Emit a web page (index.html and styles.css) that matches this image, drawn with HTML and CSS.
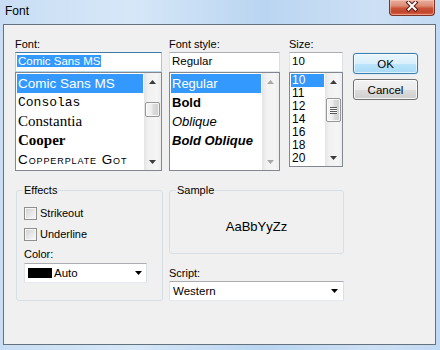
FILE: index.html
```html
<!DOCTYPE html>
<html lang="en">

<head>
  <meta charset="UTF-8">
  <title>Font</title>
  <link rel="stylesheet" href="styles.css">
</head>

<body>
  <div class="window">
    <div class="titlebar">
      <span class="title">Font</span>
      <div class="close">
        <svg width="14" height="11" viewBox="0 0 14 11">
          <path d="M3.5 1.5 L10.5 8.5 M10.5 1.5 L3.5 8.5" stroke="#5e2118" stroke-width="4.2" stroke-linecap="square" fill="none"/>
          <path d="M3.5 1.5 L10.5 8.5 M10.5 1.5 L3.5 8.5" stroke="#ffffff" stroke-width="2" stroke-linecap="square" fill="none"/>
        </svg>
      </div>
    </div>

    <div class="client">
      <div class="top-row">
        <div class="col col-font">
          <div class="label">Font:</div>
          <div class="textbox focused"><span class="sel">Comic Sans MS</span></div>
          <div class="listbox">
            <div class="items">
              <div class="item selected f-comic">Comic Sans MS</div>
              <div class="item f-consolas">Consolas</div>
              <div class="item f-constantia">Constantia</div>
              <div class="item f-cooper">Cooper</div>
              <div class="item f-copper">Copperplate Got</div>
            </div>
            <div class="scrollbar">
              <div class="sb-btn"><svg width="7" height="4"><polygon points="3.5,0 7,4 0,4" /></svg></div>
              <div class="track"><div class="thumb thumb-font"></div></div>
              <div class="sb-btn"><svg width="7" height="4"><polygon points="0,0 7,0 3.5,4" /></svg></div>
            </div>
          </div>
        </div>

        <div class="col col-style">
          <div class="label">Font style:</div>
          <div class="textbox">Regular</div>
          <div class="listbox">
            <div class="items">
              <div class="item selected st">Regular</div>
              <div class="item st st-bold">Bold</div>
              <div class="item st st-italic">Oblique</div>
              <div class="item st st-bold st-italic">Bold Oblique</div>
            </div>
            <div class="scrollbar disabled">
              <div class="sb-btn"><svg width="7" height="4"><polygon points="3.5,0 7,4 0,4" /></svg></div>
              <div class="track"></div>
              <div class="sb-btn"><svg width="7" height="4"><polygon points="0,0 7,0 3.5,4" /></svg></div>
            </div>
          </div>
        </div>

        <div class="col col-size">
          <div class="label">Size:</div>
          <div class="textbox">10</div>
          <div class="listbox size-list">
            <div class="items">
              <div class="item selected sz">10</div>
              <div class="item sz">11</div>
              <div class="item sz">12</div>
              <div class="item sz">14</div>
              <div class="item sz">16</div>
              <div class="item sz">18</div>
              <div class="item sz">20</div>
            </div>
            <div class="scrollbar">
              <div class="sb-btn"><svg width="7" height="4"><polygon points="3.5,0 7,4 0,4" /></svg></div>
              <div class="track">
                <div class="thumb thumb-size">
                  <span class="grip"></span>
                </div>
              </div>
              <div class="sb-btn"><svg width="7" height="4"><polygon points="0,0 7,0 3.5,4" /></svg></div>
            </div>
          </div>
        </div>

        <div class="buttons">
          <button class="btn btn-default">OK</button>
          <button class="btn">Cancel</button>
        </div>
      </div>

      <div class="bottom-row">
        <fieldset class="group effects">
          <legend>Effects</legend>
          <div class="check-row first"><span class="check"></span>Strikeout</div>
          <div class="check-row"><span class="check"></span>Underline</div>
          <div class="label color-label">Color:</div>
          <div class="combo color-combo">
            <span class="swatch"></span>
            <span class="combo-text">Auto</span>
            <svg class="drop" width="7" height="4"><polygon points="0,0 7,0 3.5,4" /></svg>
          </div>
        </fieldset>

        <div class="right-col">
          <fieldset class="group sample">
            <legend>Sample</legend>
            <div class="sample-text">AaBbYyZz</div>
          </fieldset>
          <div class="label script-label">Script:</div>
          <div class="combo script-combo">
            <span class="combo-text">Western</span>
            <svg class="drop" width="7" height="4"><polygon points="0,0 7,0 3.5,4" /></svg>
          </div>
        </div>
      </div>
    </div>
  </div>
</body>

</html>
```

FILE: styles.css
```css
* {
  box-sizing: border-box;
  margin: 0;
  padding: 0;
}

body {
  width: 440px;
  height: 350px;
  overflow: hidden;
  font-family: 'Liberation Sans', Arial, sans-serif;
  font-size: 11px;
  color: #000;
}

.window {
  width: 440px;
  height: 350px;
  padding: 0 4px 5px 3px;
  background: linear-gradient(to right, #c9def4 0%, #d6e7f8 30%, #bad5f1 60%, #cde0f5 85%, #c2daf3 100%);
}

.titlebar {
  height: 24px;
  display: flex;
  justify-content: space-between;
  align-items: flex-start;
}

.title {
  font-size: 12px;
  line-height: 14px;
  padding: 4px 0 0 2px;
}

.close {
  width: 46px;
  height: 16px;
  margin-right: 1px;
  display: flex;
  justify-content: center;
  padding-top: 1px;
  border: 1px solid #7d3326;
  border-top: none;
  border-radius: 0 0 4px 4px;
  background: linear-gradient(#eab0a2 0%, #dc8a72 40%, #c9553b 55%, #c2432a 80%, #d7694c 100%);
  box-shadow: inset 0 0 0 1px rgba(255, 210, 190, 0.5);
}

.client {
  height: 321px;
  border: 1px solid #66717e;
  background: #f0f0f0;
  padding: 13px 0 0 11px;
}

/* top: font / style / size columns and buttons */
.top-row {
  display: flex;
  align-items: flex-start;
}

.col-font {
  width: 147px;
  margin-right: 7px;
}

.col-style {
  width: 111px;
  margin-right: 9px;
}

.col-size {
  width: 54px;
  margin-right: 10px;
}

.label {
  line-height: 13px;
  margin-bottom: 1px;
}

.textbox {
  height: 20px;
  border: 1px solid;
  border-color: #abadb3 #dbdfe6 #e3e9ef #e2e3ea;
  background: #fff;
  padding: 2px 2px 0;
  line-height: 13px;
  font-size: 11.5px;
  white-space: nowrap;
  overflow: hidden;
}

.textbox.focused {
  border-color: #3d7bad #a4c9e3 #b7d9ed #b5cfe7;
}

.sel {
  background: #3399ff;
  color: #fff;
  padding: 0 1px;
  margin-left: -1px;
}

.listbox {
  height: 99px;
  border: 1px solid #828790;
  background: #fff;
  display: flex;
}

.size-list {
  height: 95px;
}

.items {
  flex: 1;
  min-width: 0;
  padding: 1px;
  overflow: hidden;
}

.item {
  height: 19px;
  line-height: 19px;
  padding-left: 1px;
  white-space: nowrap;
  overflow: hidden;
}

.item.selected {
  background: #3399ff;
  color: #fff;
}

.f-comic {
  font-size: 13.5px;
}

.f-consolas {
  font-family: 'Liberation Mono', monospace;
  font-size: 13px;
}

.f-constantia {
  font-family: 'Liberation Serif', serif;
  font-size: 15px;
}

.f-cooper {
  font-family: 'Liberation Serif', serif;
  font-size: 15px;
  font-weight: bold;
}

.f-copper {
  font-size: 13.5px;
  font-variant: small-caps;
  letter-spacing: 0.9px;
}

.st {
  font-size: 13px;
}

.st-bold {
  font-weight: bold;
}

.st-italic {
  font-style: italic;
}

.sz {
  height: 13px;
  line-height: 13px;
  font-size: 12px;
}

/* scrollbars */
.scrollbar {
  width: 17px;
  display: flex;
  flex-direction: column;
  background: linear-gradient(to right, #e4e4e4 0%, #f1f1f1 25%, #f5f5f5 75%, #ededed 100%);
}

.sb-btn {
  height: 17px;
  display: flex;
  justify-content: center;
  align-items: center;
}

.sb-btn polygon {
  fill: #3c3c3c;
}

.scrollbar.disabled .sb-btn polygon {
  fill: #a8a8a8;
}

.track {
  flex: 1;
}

.thumb {
  width: 15px;
  margin-left: 1px;
  border: 1px solid #979797;
  border-radius: 2px;
  background: linear-gradient(to right, #f6f6f6 0%, #ececec 45%, #dcdcdc 55%, #cfcfcf 100%);
  box-shadow: inset 0 0 0 1px rgba(255, 255, 255, 0.75);
  display: flex;
  justify-content: center;
  align-items: center;
}

.thumb-font {
  height: 15px;
  margin-top: 12px;
}

.thumb-size {
  height: 24px;
  margin-top: 8px;
}

.grip {
  width: 7px;
  height: 7px;
  background: repeating-linear-gradient(#5c5c5c 0, #5c5c5c 1px, #f8f8f8 1px, #f8f8f8 2px);
}

/* buttons */
.buttons {
  width: 65px;
  margin-top: 15px;
  display: flex;
  flex-direction: column;
  gap: 5px;
}

.btn {
  height: 21px;
  font-family: 'Liberation Sans', Arial, sans-serif;
  font-size: 11.5px;
  color: #000;
  border: 1px solid #707070;
  border-radius: 3px;
  background: linear-gradient(#f2f2f2 0%, #ebebeb 50%, #dddddd 50%, #cfcfcf 100%);
  box-shadow: inset 0 0 0 1px rgba(255, 255, 255, 0.8);
}

.btn-default {
  border-color: #3c7fb1;
  background: linear-gradient(#eaf6fd 0%, #d9f0fc 50%, #bee6fd 50%, #a7d9f5 100%);
  box-shadow: inset 0 0 0 1px rgba(255, 255, 255, 0.6), 0 0 1px #5fb5ea;
}

/* bottom: effects, sample, script */
.bottom-row {
  display: flex;
  align-items: flex-start;
  margin-top: 13px;
}

.group {
  border: 1px solid #d5dfe5;
  border-radius: 3px;
  padding: 0 6px;
  min-width: 0;
}

.group legend {
  padding: 0 1px;
  line-height: 13px;
}

.effects {
  width: 147px;
  margin-left: 1px;
  padding-bottom: 17px;
}

.check-row {
  display: flex;
  align-items: center;
  gap: 3px;
  height: 13px;
  line-height: 13px;
  margin-top: 8px;
  margin-left: 1px;
}

.check-row.first {
  margin-top: 10px;
}

.check {
  width: 13px;
  height: 13px;
  border: 1px solid #8e8f8f;
  background: linear-gradient(135deg, #d0d0d0 0%, #e6e6e6 50%, #fafafa 100%);
  box-shadow: inset 0 0 0 1px #f6f6f6;
}

.color-label {
  margin: 7px 0 2px 1px;
}

.combo {
  height: 20px;
  border: 1px solid;
  border-color: #abadb3 #dbdfe6 #e3e9ef #e2e3ea;
  border-radius: 1px;
  background: #fff;
  display: flex;
  align-items: center;
  padding: 0 4px 0 3px;
  font-size: 11.5px;
}

.color-combo {
  width: 123px;
  margin-left: 1px;
}

.swatch {
  width: 24px;
  height: 10px;
  background: #000;
  margin-right: 2px;
}

.drop {
  margin-left: auto;
}

.right-col {
  width: 175px;
  margin-left: 6px;
}

.sample {
  padding-bottom: 0;
}

.sample-text {
  height: 56px;
  padding-top: 3px;
  display: flex;
  justify-content: center;
  align-items: center;
  font-size: 13px;
}

.script-label {
  margin-top: 13px;
}

.script-combo {
  width: 175px;
  padding-right: 5px;
}
```
